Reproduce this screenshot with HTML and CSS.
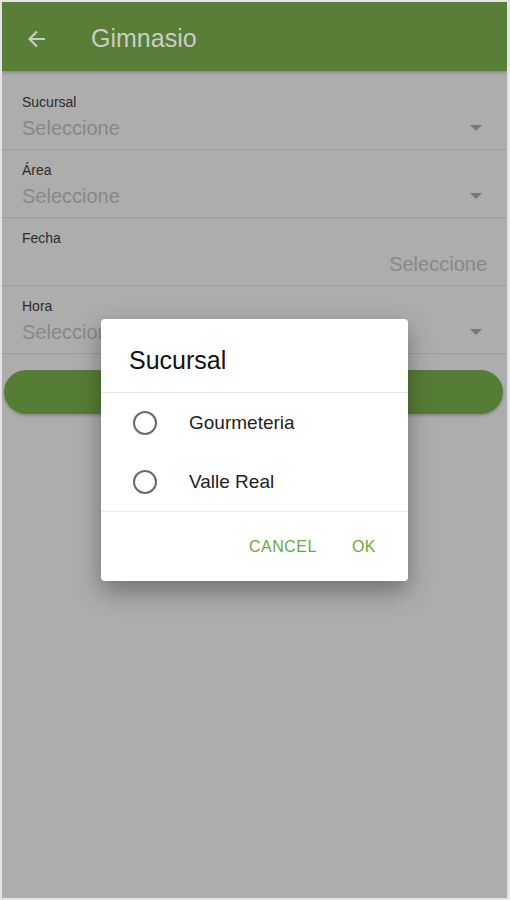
FILE: index.html
```html
<!DOCTYPE html>
<html lang="es">
  <head>
    <meta charset="UTF-8" />
    <meta name="viewport" content="width=device-width, initial-scale=1.0" />
    <title>Gimnasio</title>
    <link rel="stylesheet" href="styles.css">
  </head>
  <body>
    <div class="screen">
      <header class="app-bar">
        <svg class="back" width="24" height="24" viewBox="0 0 24 24">
          <path d="M20 12H5M12 4.5L4.5 12L12 19.5" fill="none" stroke="#c9cdc4" stroke-width="2.2" />
        </svg>
        <h1>Gimnasio</h1>
      </header>

      <form class="form">
        <div class="field">
          <label>Sucursal</label>
          <div class="value">
            <span>Seleccione</span>
            <span class="caret"></span>
          </div>
        </div>
        <div class="field">
          <label>Área</label>
          <div class="value">
            <span>Seleccione</span>
            <span class="caret"></span>
          </div>
        </div>
        <div class="field">
          <label>Fecha</label>
          <div class="value value-right">
            <span>Seleccione</span>
          </div>
        </div>
        <div class="field">
          <label>Hora</label>
          <div class="value">
            <span>Seleccione</span>
            <span class="caret"></span>
          </div>
        </div>
        <button type="button" class="submit-btn"></button>
      </form>

      <!-- picker dialog -->
      <div class="dialog">
        <div class="dialog-title">Sucursal</div>
        <ul class="options">
          <li><span class="radio"></span>Gourmeteria</li>
          <li><span class="radio"></span>Valle Real</li>
        </ul>
        <div class="dialog-actions">
          <button type="button">CANCEL</button>
          <button type="button">OK</button>
        </div>
      </div>
    </div>
  </body>
</html>
```

FILE: styles.css
```css
body {
  margin: 0;
  background-color: #e4e4e4;
  font-family: "Liberation Sans", Arial, sans-serif;
}
.screen {
  position: relative;
  margin: 2px 3px 2px 2px;
  height: 896px;
  background-color: #adadad;
  overflow: hidden;
}
.app-bar {
  box-sizing: border-box;
  height: 69px;
  padding: 4px 0 0 23px;
  background-color: #587e38;
  display: flex;
  align-items: center;
  box-shadow: 0 2px 3px rgba(0, 0, 0, 0.2);
}
.app-bar h1 {
  margin: 0 0 0 42px;
  font-size: 25px;
  font-weight: normal;
  color: #c9cdc4;
}
.form {
  padding-top: 11px;
}
.field {
  padding: 12px 20px 10px 20px;
  border-bottom: 1px solid #9d9d9d;
}
.field label {
  display: block;
  font-size: 14px;
  line-height: 16px;
  color: #2c2c2c;
}
.value {
  margin-top: 7px;
  display: flex;
  justify-content: space-between;
  align-items: center;
  height: 22px;
  font-size: 20px;
  color: #888888;
}
.value-right {
  justify-content: flex-end;
}
.caret {
  width: 0;
  height: 0;
  margin-right: 5px;
  border-left: 6px solid transparent;
  border-right: 6px solid transparent;
  border-top: 6px solid #787878;
}
.submit-btn {
  display: block;
  width: 499px;
  height: 44px;
  margin: 16px 0 0 2px;
  border: none;
  border-radius: 22px;
  background-color: #567d36;
  box-shadow: 0 2px 3px rgba(0, 0, 0, 0.2);
}
.dialog {
  position: absolute;
  left: 99px;
  top: 317px;
  width: 307px;
  background-color: #ffffff;
  border-radius: 4px;
  box-shadow: 0 10px 24px rgba(0, 0, 0, 0.35);
}
.dialog-title {
  height: 45px;
  padding: 28px 28px 0;
  font-size: 25px;
  line-height: 26px;
  color: #111111;
  border-bottom: 1px solid #e8e8e8;
}
.options {
  list-style: none;
  margin: 0;
  padding: 0;
}
.options li {
  height: 59px;
  display: flex;
  align-items: center;
  padding-left: 32px;
  gap: 32px;
  font-size: 19px;
  color: #222222;
}
.radio {
  width: 20px;
  height: 20px;
  border: 2px solid #6a6a6a;
  border-radius: 50%;
}
.dialog-actions {
  height: 69px;
  border-top: 1px solid #ececec;
  display: flex;
  justify-content: flex-end;
  align-items: center;
  gap: 35px;
  padding-right: 32px;
}
.dialog-actions button {
  padding: 0;
  border: none;
  background: none;
  font-family: "Liberation Sans", Arial, sans-serif;
  font-size: 16px;
  letter-spacing: 0.5px;
  color: #6aaa3c;
}
```
